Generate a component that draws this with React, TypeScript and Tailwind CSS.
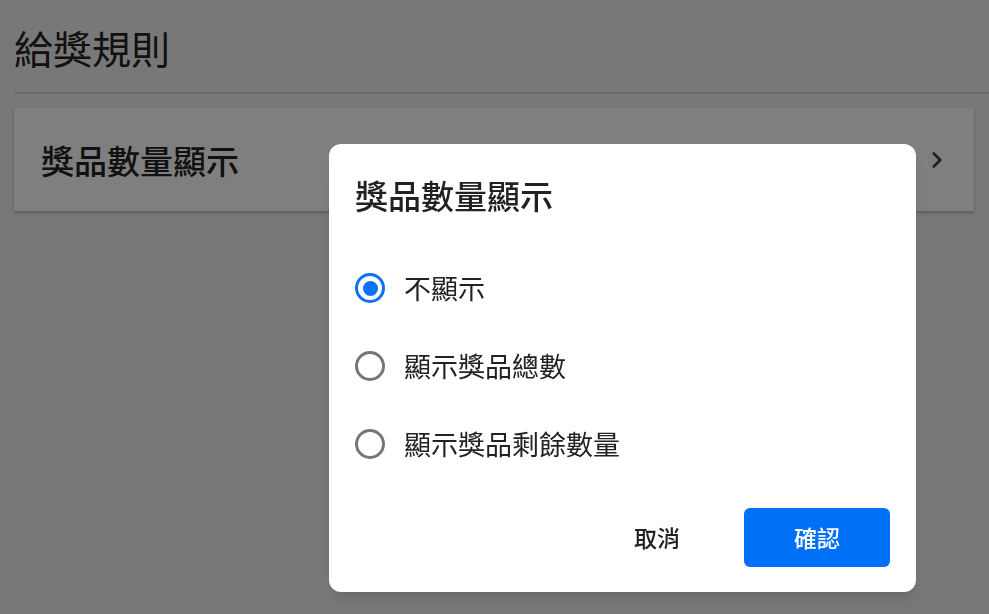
import { ChevronRight } from "lucide-react";

const options = ["不顯示", "顯示獎品總數", "顯示獎品剩餘數量"];

function Radio({ checked }: { checked: boolean }) {
  return checked ? (
    <span className="flex h-[30px] w-[30px] items-center justify-center rounded-full border-[3px] border-[#0a72f6]">
      <span className="h-[15px] w-[15px] rounded-full bg-[#0a72f6]" />
    </span>
  ) : (
    <span className="h-[30px] w-[30px] rounded-full border-[3px] border-[#767676]" />
  );
}

export default function App() {
  return (
    <div
      className="relative min-h-screen bg-[#f1f1f1] text-[#222]"
      style={{ fontFamily: '"Noto Sans CJK TC", "Noto Sans", sans-serif' }}
    >
      <div className="pl-[14px]">
        <h1 className="pt-[23px] pb-[21px] text-[39px] leading-[48px] font-normal">給獎規則</h1>
        <div className="h-[2px] bg-[#d6d6d6]" />
      </div>

      <div className="mx-[14px] mt-[14px] mr-[15px] flex h-[103px] items-center justify-between bg-white pr-[24px] pl-[27px] shadow-[0_2px_3px_rgba(0,0,0,0.25)]">
        <span className="text-[33px] leading-[40px] font-medium">獎品數量顯示</span>
        <ChevronRight className="h-[26px] w-[26px] text-[#444]" strokeWidth={2.5} />
      </div>

      <div className="fixed inset-0 bg-black/50">
        <div className="absolute top-[144px] left-[329px] w-[587px] rounded-xl bg-white px-[26px] pb-[25px] shadow-lg">
          <h2 className="pt-[31px] text-[33px] leading-[40px] font-medium">獎品數量顯示</h2>
          <div className="mt-[34px] flex flex-col">
            {options.map((o, i) => (
              <label key={o} className="flex h-[78px] items-center gap-[19px]">
                <Radio checked={i === 0} />
                <span className="text-[27px] leading-[34px]">{o}</span>
              </label>
            ))}
          </div>
          <div className="mt-[25px] flex items-center justify-end gap-[17px]">
            <button className="h-[59px] w-[140px] text-[23px] font-medium">取消</button>
            <button className="h-[59px] w-[146px] rounded-md bg-[#0071f7] text-[23px] font-medium text-white">
              確認
            </button>
          </div>
        </div>
      </div>
    </div>
  );
}
